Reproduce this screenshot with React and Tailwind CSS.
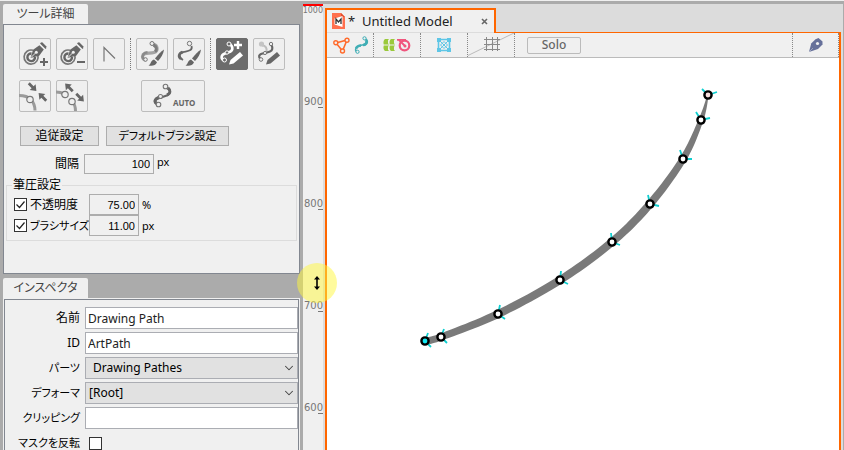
import React from "react";
import { ChevronDown } from "lucide-react";
import clsx from "clsx";

const rulerMarks = ["900", "800", "700", "600"];

// position of the node, ends of its two handles, brush width
const nodes = [
  { x: 425, y: 341, a: [428, 333], b: [431, 347], w: 7 },
  { x: 441, y: 337, a: [444, 329], b: [447, 343], w: 7 },
  { x: 498, y: 314, a: [500, 305], b: [505, 319], w: 8 },
  { x: 560, y: 280, a: [561, 271], b: [568, 284], w: 8 },
  { x: 612, y: 242, a: [611, 233], b: [620, 245], w: 8 },
  { x: 650, y: 204, a: [648, 195], b: [659, 206], w: 8 },
  { x: 683, y: 159, a: [680, 150], b: [692, 159], w: 7 },
  { x: 701, y: 120, a: [696, 112], b: [710, 118], w: 5 },
  { x: 708, y: 95, a: [702, 89], b: [717, 92], w: 1 },
];

const spline = (p0, p1, p2, p3, t) =>
  0.5 * (2 * p1 + (p2 - p0) * t + (2 * p0 - 5 * p1 + 4 * p2 - p3) * t * t + (3 * p1 - p0 - 3 * p2 + p3) * t * t * t);

const strokeOutline = (points) => {
  const samples = [];
  for (let i = 0; i < points.length - 1; i++) {
    const p0 = points[Math.max(i - 1, 0)];
    const p1 = points[i];
    const p2 = points[i + 1];
    const p3 = points[Math.min(i + 2, points.length - 1)];
    for (let s = 0; s <= 12; s++) {
      const t = s / 12;
      samples.push({
        x: spline(p0.x, p1.x, p2.x, p3.x, t),
        y: spline(p0.y, p1.y, p2.y, p3.y, t),
        w: p1.w + (p2.w - p1.w) * t,
      });
    }
  }
  const left = [];
  const right = [];
  samples.forEach((p, i) => {
    const prev = samples[Math.max(i - 2, 0)];
    const next = samples[Math.min(i + 2, samples.length - 1)];
    const dx = next.x - prev.x;
    const dy = next.y - prev.y;
    const len = Math.hypot(dx, dy) || 1;
    const nx = (-dy / len) * (p.w / 2);
    const ny = (dx / len) * (p.w / 2);
    left.push(`${p.x + nx},${p.y + ny}`);
    right.unshift(`${p.x - nx},${p.y - ny}`);
  });
  return [...left, ...right].join(" ");
};

const Icon = ({ children, className = "size-8", box = "0 0 32 32" }) => (
  <svg viewBox={box} className={clsx("block shrink-0", className)} fill="none" aria-hidden="true">
    {children}
  </svg>
);

const PenTarget = ({ minus }) => (
  <Icon>
    <path d="M14 12.3A7 7 0 1 0 18.8 17" stroke="#777" strokeWidth="1.7" />
    <path d="M12.5 15.5A3.8 3.8 0 1 0 16 19" stroke="#666" strokeWidth="2.4" />
    <path d="M11.5 20l2.6-8.2 6.3-4.6 4.4 4.4-4.6 6.2z" fill="#666" />
    <path d="M12 19.500l4.800-4.800" stroke="#eee" strokeWidth="0.9" />
    <circle cx="17.300" cy="14.200" r="1.500" fill="#eee" />
    <path d="M21.500 5l5.500 5.500M22.500 4.500l4.800 4.800" stroke="#666" strokeWidth="1.3" />
    <path d="M21 24h8" stroke="#666" strokeWidth="2" />
    {!minus && <path d="M25 20v8" stroke="#666" strokeWidth="2" />}
  </Icon>
);

const CornerPoint = () => (
  <Icon>
    <path d="M11 23.500V9.500L22 20.500" stroke="#777" strokeWidth="1.200" />
  </Icon>
);

const Brush = () => (
  <>
    <path d="M28 11.500c-3 2-6.500 5.500-9 9l3 2.500c3-3 5.500-7 6-11.500z" fill="#666" />
    <path d="M18 21.500l3 2.800c-1.500 3.500-5 4-8.500 3.200 2.500-1 2-5 5.500-6z" fill="#666" />
  </>
);

const BrushSoft = () => (
  <Icon>
    <path d="M17 6c5 1 5.500 7 1 8.500C13.500 16 7 13.500 6.500 18.500c-.2 2 1 3.500 3.500 3.500" stroke="#a4a4a4" strokeWidth="3.200" />
    <path d="M17.500 7c3.500 1.500 3.500 5 1.500 6.500" stroke="#7c7c7c" strokeWidth="3" />
    <path d="M11.500 14.300C7.500 14.500 5.500 18 7.500 21" stroke="#8a8a8a" strokeWidth="2.400" />
    <circle cx="16" cy="5.500" r="2" fill="#efefef" stroke="#777" />
    <circle cx="9.500" cy="21.500" r="1.800" fill="#efefef" stroke="#777" />
    <Brush />
  </Icon>
);

const BrushLine = () => (
  <Icon>
    <path d="M18.500 8c1.500 5-4 5-8 6-4.500 1-5.500 5-.5 8" stroke="#666" strokeWidth="1.800" />
    <path d="M9.500 14c-4 1.500-4.500 5-1.500 7" stroke="#666" strokeWidth="2.600" />
    <circle cx="16.500" cy="5.500" r="2.200" fill="#efefef" stroke="#777" />
    <Brush />
  </Icon>
);

const SCurve = ({ color, back }) => (
  <>
    <path d="M13 6c4 1.500 4.500 6 1 7.800l-5 1.700c-4.200 1.500-4.500 5-1 7" stroke={color} strokeWidth="2.600" />
    <circle cx="13" cy="6" r="2" fill={back} stroke={color} />
    <circle cx="11" cy="14.500" r="1.700" fill={back} stroke={color} />
    <circle cx="8.500" cy="22" r="2" fill={back} stroke={color} />
  </>
);

const PencilPlus = () => (
  <Icon>
    <SCurve color="#fff" back="#6c6c6c" />
    <path d="M18 7h8M22 3v8" stroke="#fff" strokeWidth="2.400" />
    <path d="M13 26.500l1.500-4.500 9.500-8 3 3.500-9.500 8z" fill="#fff" />
  </Icon>
);

const PencilEdit = () => (
  <Icon>
    <path d="M9 7.500c4 0 5 3 4.500 6" stroke="#bdbdbd" strokeWidth="2" />
    <circle cx="8.500" cy="6" r="2.600" fill="#c4c4c4" />
    <path d="M18.500 7c1.500 3 1 5.500-1.500 6.500-3 1.200-5 1.500-7.500 2-4 1-4.500 3.500-1.500 6" stroke="#666" strokeWidth="2.200" />
    <circle cx="18" cy="6" r="1.700" fill="#efefef" stroke="#777" />
    <circle cx="12" cy="15" r="1.600" fill="#efefef" stroke="#777" />
    <circle cx="8" cy="21.500" r="1.800" fill="#efefef" stroke="#777" />
    <path d="M13 26.500l1.500-4.500 9.500-8 3 3.500-9.500 8z" fill="#666" />
  </Icon>
);

const Arrow = ({ turn }) => (
  <path d="M-6-1.400H-.5V-4.200L4.800 0-.5 4.200V1.400H-6z" fill="#666" transform={turn} />
);

const JoinPoints = () => (
  <Icon>
    <path d="M0 15.500c5 0 9 1 12 4 3 3.500 4 7 4 11" stroke="#9a9a9a" strokeWidth="3" />
    <circle cx="11" cy="19.500" r="3.200" fill="#efefef" stroke="#777" strokeWidth="1.200" />
    <Arrow turn="translate(14 7.500) rotate(45)" />
    <Arrow turn="translate(23 16.500) rotate(225)" />
  </Icon>
);

const SplitPoints = () => (
  <Icon>
    <path d="M0 12c3 0 5 0 8 2M16.500 22c2.500 2.500 3 5 3 9" stroke="#9a9a9a" strokeWidth="3" />
    <circle cx="9" cy="14.500" r="3.200" fill="#efefef" stroke="#777" strokeWidth="1.200" />
    <circle cx="16" cy="21.500" r="3.200" fill="#efefef" stroke="#777" strokeWidth="1.200" />
    <Arrow turn="translate(12.500 7) rotate(225)" />
    <Arrow turn="translate(24.500 18) rotate(45)" />
  </Icon>
);

const AutoCurve = () => (
  <Icon box="0 0 22 32" className="h-8 w-[22px]">
    <path d="M16 7.500c5 1.500 5 6.500 1.500 7.700L8 18.500c-5 2-4 5.500 1 6.500" stroke="#666" strokeWidth="2" />
    <path d="M18 8c3 2.500 2.500 5.500-1 7M8.500 17.500c-4 1.500-4.500 4-1.500 6" stroke="#666" strokeWidth="3" />
    <circle cx="15.500" cy="6.500" r="2.300" fill="#efefef" stroke="#777" strokeWidth="1.100" />
    <circle cx="10.500" cy="16.500" r="2" fill="#efefef" stroke="#777" strokeWidth="1.100" />
    <circle cx="8.500" cy="24.500" r="2.300" fill="#efefef" stroke="#777" strokeWidth="1.100" />
  </Icon>
);

const ToolButton = ({ label, active, wide, children }) => (
  <button
    type="button"
    aria-label={label}
    className={clsx(
      "flex h-8 items-center rounded-[2px] border",
      wide ? "w-16 pl-2" : "w-8 justify-center",
      active ? "border-[#6c6c6c] bg-[#6c6c6c]" : "border-[#bdbdbd] bg-[#efefef]"
    )}
  >
    {children}
  </button>
);

const DottedLine = () => <div className="h-8 border-l border-dotted border-[#777]" />;

const PanelTab = ({ children }) => (
  <div className="flex h-5 w-[85px] items-center justify-center rounded-t-[2px] bg-[#f0f0f0] text-[#444]">{children}</div>
);

const GreyButton = ({ children, className }) => (
  <button type="button" className={clsx("flex h-5 items-center justify-center border border-[#adadad] bg-[#e1e1e1]", className)}>
    {children}
  </button>
);

const CheckBox = ({ id, checked }) => (
  <span className="relative block size-[13px] shrink-0">
    <input
      id={id}
      type="checkbox"
      defaultChecked={checked}
      className="peer block size-[13px] appearance-none border border-[#333] bg-white"
    />
    <svg viewBox="0 0 13 13" className="pointer-events-none absolute inset-0 hidden peer-checked:block" fill="none" aria-hidden="true">
      <path d="M2.500 6.500l3 3 5-6" stroke="#222" strokeWidth="1.200" />
    </svg>
  </span>
);

const valueBox = "border border-[#adadad] bg-[#f0f0f0] pr-[3px] text-right font-['Liberation_Sans',sans-serif] text-[11px]";

const PressureRow = ({ id, label, value, unit, small }) => (
  <div className="flex items-center">
    <CheckBox id={id} checked />
    <label htmlFor={id} className={clsx("w-[62px] shrink-0 pl-[3px] whitespace-nowrap", small && "text-[11px]")}>
      {label}
    </label>
    <input aria-label={label} defaultValue={value} className={clsx(valueBox, "h-[21px] w-[50px]")} />
    <span className="pl-[3px] text-[11px]">{unit}</span>
  </div>
);

const ToolDetails = () => (
  <section>
    <PanelTab>ツール詳細</PanelTab>
    <div className="h-[250px] border border-[#828790] bg-[#f0f0f0]">
      <div className="flex gap-[5px] pt-[13px] pl-[15px]">
        <ToolButton label="Add point"><PenTarget /></ToolButton>
        <ToolButton label="Remove point"><PenTarget minus /></ToolButton>
        <ToolButton label="Corner point"><CornerPoint /></ToolButton>
        <DottedLine />
        <ToolButton label="Soft brush"><BrushSoft /></ToolButton>
        <ToolButton label="Line brush"><BrushLine /></ToolButton>
        <DottedLine />
        <ToolButton label="Add stroke" active><PencilPlus /></ToolButton>
        <ToolButton label="Edit stroke"><PencilEdit /></ToolButton>
      </div>
      <div className="flex gap-[5px] pt-[10px] pl-[15px]">
        <ToolButton label="Join"><JoinPoints /></ToolButton>
        <ToolButton label="Split"><SplitPoints /></ToolButton>
        <div className="w-[43px] shrink-0" />
        <ToolButton label="Auto" wide>
          <AutoCurve />
          <span className="pt-3.5 pl-px font-['Noto_Sans',sans-serif] text-[8px] leading-[10px] font-bold text-[#666]">AUTO</span>
        </ToolButton>
      </div>
      <div className="flex gap-[7px] pt-[14px] pl-4">
        <GreyButton className="w-[79px]">追従設定</GreyButton>
        <GreyButton className="w-[123px] text-[11px]">デフォルトブラシ設定</GreyButton>
      </div>
      <div className="flex items-center pt-2">
        <label htmlFor="interval" className="w-20 pr-[5px] text-right">
          間隔
        </label>
        <input id="interval" defaultValue="100" className={clsx(valueBox, "h-5 w-[70px]")} />
        <span className="self-start pl-[3px] text-[11px]">px</span>
      </div>
      <fieldset className="mx-[2px] mt-[2px] border border-[#dcdcdc] pb-1 pl-[7px]">
        <legend className="-ml-[2px] px-[1px] leading-[18px]">筆圧設定</legend>
        <PressureRow id="opacity" label="不透明度" value="75.00" unit="%" />
        <PressureRow id="brush-size" label="ブラシサイズ" value="11.00" unit="px" small />
      </fieldset>
    </div>
  </section>
);

const InspectorRow = ({ id, label, small, children }) => (
  <div className="flex items-center">
    <label htmlFor={id} className={clsx("w-20 shrink-0 pr-[5px] text-right whitespace-nowrap", small && "text-[11px]")}>
      {label}
    </label>
    {children}
  </div>
);

const fieldBox = "h-[22px] w-full border border-[#abadb3] text-[12px]";

const TextField = ({ id, label, value, small }) => (
  <InspectorRow id={id} label={label} small={small}>
    <input id={id} defaultValue={value} className={clsx(fieldBox, "bg-white px-[2px] text-[#222]")} />
  </InspectorRow>
);

const SelectField = ({ id, label, value, indent }) => (
  <InspectorRow id={id} label={label} small>
    <div className="relative w-full">
      <select id={id} className={clsx(fieldBox, "block appearance-none bg-[#e1e1e1]", indent ? "pl-[7px]" : "pl-[3px]")}>
        <option>{value}</option>
      </select>
      <ChevronDown className="pointer-events-none absolute top-1 right-[2px] size-3.5 text-[#444]" strokeWidth={1.8} />
    </div>
  </InspectorRow>
);

const Inspector = () => (
  <section className="flex min-h-0 flex-1 flex-col">
    <PanelTab>インスペクタ</PanelTab>
    <div className="min-h-0 flex-1 overflow-hidden border border-b-0 border-[#f0f0f0] bg-[#f0f0f0]">
      <div className="flex h-full flex-col gap-[3px] border border-b-0 border-[#828790] pt-[7px]">
        <TextField id="name" label="名前" value="Drawing Path" />
        <TextField id="art-id" label="ID" value="ArtPath" />
        <SelectField id="parts" label="パーツ" value="Drawing Pathes" indent />
        <SelectField id="deformer" label="デフォーマ" value="[Root]" />
        <TextField id="clipping" label="クリッピング" value="" small />
        <InspectorRow id="invert" label="マスクを反転" small>
          <div className="flex h-[22px] items-center pl-1">
            <CheckBox id="invert" />
          </div>
        </InspectorRow>
      </div>
    </div>
  </section>
);

const Ruler = () => (
  <div className="w-5 shrink-0 overflow-hidden bg-[#f0f0f0] font-['DejaVu_Sans',sans-serif] text-[10px] leading-[10px] text-[#777]">
    <div className="h-[2px] bg-[#f00]" />
    {rulerMarks.map((mark, i) => (
      <div key={mark} className="flex h-[102px] flex-col items-end justify-between">
        <span className="text-[8px]">{i === 0 ? "1000" : ""}</span>
        <div className="flex flex-col items-end">
          <span>{mark}</span>
          <span className="h-px w-[5px] bg-[#777]" />
        </div>
      </div>
    ))}
  </div>
);

const ToolbarGroup = ({ children, className }) => (
  <div className={clsx("flex w-[47px] shrink-0 items-center border-r border-dotted border-[#888]", className)}>{children}</div>
);

const DocumentToolbar = () => (
  <div className="flex h-[25px] shrink-0 border-b border-[#bbb] bg-[#f0f0f0]">
    <ToolbarGroup className="gap-1 pl-1.5">
      <Icon box="0 0 17 17" className="size-[17px]">
        <path d="M3 6l11-3-4.500 11z" stroke="#ff6a2b" strokeWidth="1.600" />
        <circle cx="2.800" cy="5.800" r="2" fill="#f0f0f0" stroke="#ff6a2b" strokeWidth="1.400" />
        <circle cx="14" cy="3.200" r="2" fill="#f0f0f0" stroke="#ff6a2b" strokeWidth="1.400" />
        <circle cx="9.500" cy="14" r="2" fill="#f0f0f0" stroke="#ff6a2b" strokeWidth="1.400" />
      </Icon>
      <Icon box="0 0 15 18" className="h-[18px] w-[15px]">
        <path d="M10 2c4 1.500 4.500 5.500 1 6.500C8 9.500 5 8.500 2.500 11.500 1 13.500 1.500 15 3 16" stroke="#40aeb5" strokeWidth="1.600" />
        <path d="M12 4c1.500 3-.5 5-3 5M7 9.500c-2.500 0-4 1-5 3" stroke="#40aeb5" strokeWidth="2.600" />
        <circle cx="10.500" cy="2.300" r="1.600" fill="#f0f0f0" stroke="#40aeb5" />
        <circle cx="3.500" cy="15.800" r="1.600" fill="#f0f0f0" stroke="#40aeb5" />
      </Icon>
    </ToolbarGroup>
    <ToolbarGroup className="gap-[2px] pl-[9px]">
      <Icon box="0 0 12 12" className="size-3">
        <path d="M2 0h4L5 1.200v3L6 5.500H.8C0 3.500.5 1.200 2 0zM8 0h4l-1 1.200v3l1 1.300H6.800C6.200 3.500 6.500 1.200 8 0zM.8 6.500H6L5 7.800v3L6 12H2C.5 10.800 0 8.500.8 6.500zM6.800 6.500H12l-1 1.300v3l1 1.200H8C6.500 10.800 6.200 8.500 6.800 6.500z" fill="#9ac93b" />
      </Icon>
      <Icon box="0 0 14 14" className="size-3.5">
        <circle cx="7.500" cy="7.500" r="4.800" stroke="#f0557d" strokeWidth="2.200" />
        <path d="M0 1.800h9M2 2l6 6" stroke="#f0557d" strokeWidth="1.800" />
        <circle cx="8" cy="8" r="1.500" fill="#f0557d" />
      </Icon>
    </ToolbarGroup>
    <ToolbarGroup className="justify-center">
      <Icon box="0 0 14 14" className="size-3.5">
        <path d="M1.500 1.500h11v11h-11z" stroke="#5ec6e6" strokeWidth="1.600" />
        <path d="M3 3l8 8M11 3l-8 8M7 3.500L10.500 7 7 10.500 3.500 7z" stroke="#5ec6e6" />
        <path d="M0 0h4v4H0zM10 0h4v4h-4zM0 10h4v4H0zM10 10h4v4h-4z" fill="#5ec6e6" />
      </Icon>
    </ToolbarGroup>
    <ToolbarGroup>
      <Icon box="0 0 46 24" className="h-6 w-[46px]">
        <path d="M0 22.500L46 0" stroke="#bbb" />
        <path d="M18.500 4v14M24.500 4v14M29.500 4v14M16 6.500h16M16 11.500h16M16 16.500h16" stroke="#888" />
      </Icon>
    </ToolbarGroup>
    <div className="flex items-center pl-3">
      <button
        type="button"
        className="flex h-[17px] w-[54px] items-center justify-center rounded-[2px] border border-[#bbb] font-['Noto_Sans',sans-serif] text-[12px] font-medium text-[#666]"
      >
        Solo
      </button>
    </div>
    <ToolbarGroup className="ml-auto justify-center border-l">
      <Icon box="0 0 14 14" className="size-3.5">
        <path d="M0 14L2.200 5.500 6.500 1.200 9.500 0 13.500 3.500 13.500 6.500 9 11z" fill="#66709a" />
        <path d="M0 14l4-4" stroke="#f0f0f0" strokeWidth="0.400" />
        <circle cx="8.500" cy="5.500" r="1.600" fill="#f0f0f0" />
      </Icon>
    </ToolbarGroup>
  </div>
);

const Canvas = () => (
  <div className="min-h-0 flex-1 overflow-hidden bg-white">
    <svg viewBox="327 58 512 392" width="512" height="392" fill="none" aria-label="Drawing Path">
      <polygon points={strokeOutline(nodes)} fill="#7a7a7a" />
      {nodes.map((node, i) => (
        <g key={node.x}>
          <path d={`M${node.a.join(" ")}L${node.x} ${node.y}L${node.b.join(" ")}`} stroke="#10cfd0" strokeWidth="1.8" />
          <circle
            cx={node.x}
            cy={node.y}
            r="3.600"
            fill={i === 0 ? "#12e8f2" : i === nodes.length - 1 ? "#f7dede" : "#fff"}
            stroke="#000"
            strokeWidth="2.400"
          />
        </g>
      ))}
    </svg>
  </div>
);

const Document = () => (
  <main className="flex min-w-0 flex-1 flex-col border-r border-[#ababab] bg-[#dcdcdc] pt-1 pr-[2px] pl-[2px]">
    <div className="flex h-6 w-[171px] shrink-0 items-center border-2 border-b-0 border-[#ff6600] bg-[#f0f0f0] pl-[5px]">
      <Icon box="0 0 13 16" className="h-4 w-[13px]">
        <path d="M0 0h9l4 4v12H0z" fill="#ff6f4d" />
        <path d="M9 0v4h4z" fill="#e04e2c" />
        <path d="M2.500 5.500l8-2.500v11l-8-2.500z" fill="#fff" />
        <path d="M4 11V6l2.500 3L9 6v5" stroke="#333" strokeWidth="1.300" />
      </Icon>
      <span className="pl-[3px] font-['Noto_Sans',sans-serif] text-[13px] whitespace-pre text-[#222]">*  Untitled Model</span>
      <button type="button" aria-label="Close" className="mr-1 ml-auto flex size-3 items-center justify-center">
        <Icon box="0 0 7 7" className="size-[7px]">
          <path d="M1 1l5 5M6 1L1 6" stroke="#666" strokeWidth="1.600" />
        </Icon>
      </button>
    </div>
    <div className="flex min-h-0 flex-1 flex-col border-x-2 border-[#ff6600]">
      <div className="ml-[167px] h-px shrink-0 bg-[#ff6600]" />
      <DocumentToolbar />
      <Canvas />
    </div>
  </main>
);

const ResizeCursor = () => (
  <div className="pointer-events-none absolute top-[263px] left-[297px] flex size-10 items-center justify-center rounded-full bg-[#fff83c]/50">
    <Icon box="0 0 8 16" className="h-4 w-2">
      <path d="M4 2v12" stroke="#000" strokeWidth="1.600" />
      <path d="M4 1l3 3.500h-6zM4 15l3-3.500h-6z" fill="#000" />
    </Icon>
  </div>
);

export default function App() {
  return (
    <div className="relative flex h-screen flex-col overflow-hidden bg-[#ababab] font-['Noto_Sans','Noto_Sans_CJK_JP',sans-serif] text-[12px] leading-4 text-black [font-feature-settings:'palt']">
      <div className="h-px shrink-0 bg-[#f0f0f0]" />
      <div className="flex min-h-0 flex-1 pt-[3px]">
        <aside className="mr-[3px] ml-[3px] flex w-[297px] shrink-0 flex-col gap-1">
          <ToolDetails />
          <Inspector />
        </aside>
        <Ruler />
        <Document />
      </div>
      <ResizeCursor />
    </div>
  );
}
